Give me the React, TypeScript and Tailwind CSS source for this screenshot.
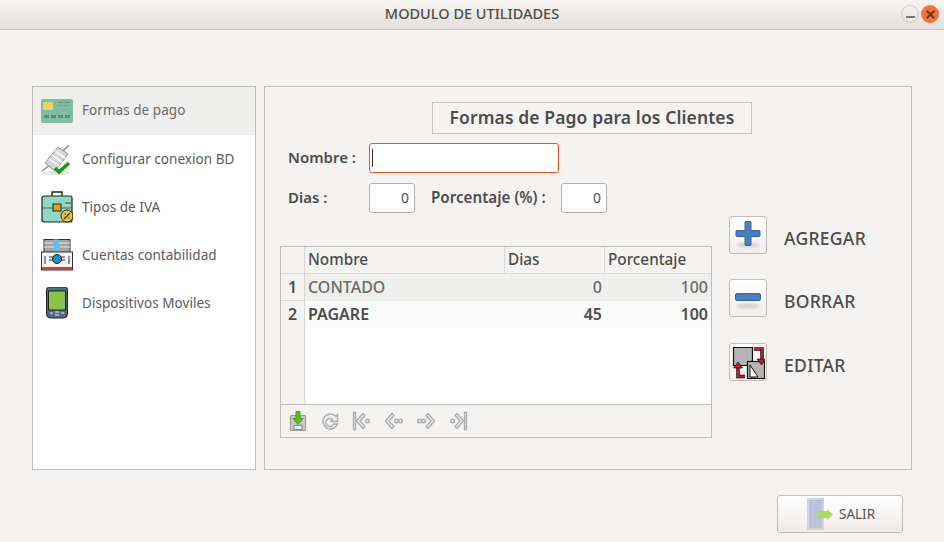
import React from 'react';
import { X } from 'lucide-react';

const font = { fontFamily: '"Noto Sans", sans-serif' };

const CardIcon = () => (
  <svg width="32" height="24" viewBox="0 0 32 24">
    <rect width="32" height="24" rx="2" fill="#7fbda3" />
    <rect x="2" y="3" width="10" height="8" rx="1" fill="#ecd06a" />
    <path d="M17 3.500h5M24 3.500h5" stroke="#5f8f7c" />
    <path d="M17 6.500h12" stroke="#5f8f7c" strokeDasharray="1 1" />
    <path d="M3 17.500h5M10 17.500h5M17 17.500h5M24 17.500h5" stroke="#5d8a78" strokeWidth="3" />
  </svg>
);

const PlugIcon = () => (
  <svg width="32" height="32" viewBox="0 0 32 32">
    <ellipse cx="15" cy="30" rx="14" ry="2" fill="#e2e2e2" />
    <path d="M1 28l8-6M22 8l6-6" stroke="#8c8c8c" strokeWidth="1.500" />
    <path d="M4 20L17 4l10 7-13 17z" fill="#d6d6d6" stroke="#8c8c8c" />
    <path d="M8 16l10 7M11 12l10 7M14 8l10 7" stroke="#f6f6f6" strokeWidth="1.800" />
    <path d="M14 25l4 4 10-9" fill="none" stroke="#0f9f0f" strokeWidth="3.500" />
  </svg>
);

const CaseIcon = () => (
  <svg width="32" height="32" viewBox="0 0 32 32">
    <path d="M11 5V1h10v4" fill="none" stroke="#222" strokeWidth="1.500" />
    <rect x="1" y="5" width="30" height="26" rx="2" fill="#8ed8c4" stroke="#222" strokeWidth="1.200" />
    <path d="M1 17h30" stroke="#3d6f60" />
    <rect x="12" y="13" width="8" height="7" fill="#e8a020" stroke="#222" />
    <path d="M24 12h6" stroke="#444" />
    <circle cx="26" cy="25" r="6" fill="#f4c91e" stroke="#222" />
    <path d="M23 28l6-6M23.500 23h1.500M27 27h1.500" stroke="#222" strokeWidth="1.200" />
  </svg>
);

const CashIcon = () => (
  <svg width="32" height="32" viewBox="0 0 32 32">
    <rect x="3" y="0.500" width="26" height="14" fill="#a5a5a5" stroke="#333" />
    <path d="M3 4h26M3 8h26" stroke="#e8e8e8" />
    <rect x="12" y="0.500" width="6" height="6" fill="#63c0ea" />
    <rect x="13" y="7" width="6" height="6" fill="#63c0ea" />
    <rect x="0.500" y="13" width="31" height="18" fill="#f4f4f4" stroke="#333" />
    <rect x="1" y="28" width="30" height="3" fill="#d43c3c" />
    <circle cx="16" cy="20" r="4.500" fill="#1b8fc4" stroke="#222" />
    <path d="M4 25v-8M28 25v-8M8 18h4M8 21h4M20 18h4M20 21h4" stroke="#333" />
  </svg>
);

const PhoneIcon = () => (
  <svg width="32" height="32" viewBox="0 0 32 32">
    <path d="M5.500 3a3 3 0 0 1 3-3h15a3 3 0 0 1 3 3v24a4 4 0 0 1-4 4h-13a4 4 0 0 1-4-4z" fill="#4f6f80" stroke="#222" />
    <rect x="7.500" y="4" width="17" height="19" fill="#8bc34a" stroke="#222" />
    <path d="M9 26h3M20 26h3M14 25h4M14 28h4" stroke="#b5c8d2" strokeWidth="1.500" />
  </svg>
);

const rows = [
  { name: 'Formas de pago', icon: <CardIcon />, active: true },
  { name: 'Configurar conexion BD', icon: <PlugIcon /> },
  { name: 'Tipos de IVA', icon: <CaseIcon /> },
  { name: 'Cuentas contabilidad', icon: <CashIcon /> },
  { name: 'Dispositivos Moviles', icon: <PhoneIcon /> },
];

const Nav = ({ children }: { children: React.ReactNode }) => (
  <svg width="20" height="20" viewBox="0 0 20 20" fill="#efefee" stroke="#adadad" strokeWidth="1.400" strokeLinejoin="round">
    {children}
  </svg>
);

const PlusIcon = () => (
  <svg width="28" height="32" viewBox="0 0 28 32">
    <ellipse className="blur-[1.500px]" cx="14" cy="26" rx="12" ry="2" fill="#cfcac5" />
    <path d="M11 3.500a1 1 0 0 1 1-1h4a1 1 0 0 1 1 1v8h8a1 1 0 0 1 1 1v4a1 1 0 0 1-1 1h-8v8a1 1 0 0 1-1 1h-4a1 1 0 0 1-1-1v-8H3a1 1 0 0 1-1-1v-4a1 1 0 0 1 1-1h8z" fill="#4a7fbb" stroke="#34649e" />
  </svg>
);

const MinusIcon = () => (
  <svg width="28" height="32" viewBox="0 0 28 32">
    <ellipse className="blur-[1.500px]" cx="14" cy="24" rx="12" ry="2" fill="#cfcac5" />
    <rect x="1.500" y="11.500" width="25" height="7" rx="1.500" fill="#4a7fbb" stroke="#34649e" />
  </svg>
);

const EditIcon = () => (
  <svg width="34" height="34" viewBox="0 0 34 34">
    <path d="M2.500 2.500h19v13l-6 5h-13z" fill="#b4b4b4" stroke="#111" strokeWidth="1.200" />
    <rect x="16.500" y="16.500" width="17" height="17" fill="#b4b4b4" stroke="#111" strokeWidth="1.200" />
    <path d="M19 32V20l8 12z" fill="#fff" stroke="#111" />
    <path d="M23 4h8v11" fill="none" stroke="#111" strokeWidth="3.500" />
    <path d="M23 4h8v11" fill="none" stroke="#c8182a" strokeWidth="2" />
    <path d="M26 14h9l-4.500 6z" fill="#c8182a" stroke="#111" strokeWidth="0.700" />
    <path d="M14 31.500H7V22" fill="none" stroke="#111" strokeWidth="3.500" />
    <path d="M14 31.500H7V22" fill="none" stroke="#c8182a" strokeWidth="2" />
    <path d="M2.500 23h9L7 17z" fill="#c8182a" stroke="#111" strokeWidth="0.700" />
  </svg>
);

const Action = ({ icon, label, className }: { icon: React.ReactNode; label: string; className?: string }) => (
  <div className={`flex items-center gap-[17px] ${className ?? ''}`}>
    <div className="flex h-[38px] w-[38px] items-center justify-center rounded-[3px] border border-[#c4bcb2] bg-gradient-to-b from-white to-[#f1efec]">
      {icon}
    </div>
    <span className="pt-[6px] text-[17.500px] font-medium tracking-[0.300px] text-[#4c4c4c]">{label}</span>
  </div>
);

export default function App() {
  return (
    <div className="flex h-[542px] w-[944px] flex-col overflow-hidden bg-[#f5f3f1] text-[#4c4c4c]" style={font}>
      <header className="relative flex h-[30px] items-center justify-center rounded-t-[6px] border-b border-[#d3cbc2] bg-gradient-to-b from-[#f6f4f2] to-[#e4dfd9]">
        <span className="pb-[1px] text-[14.500px] font-medium text-[#4c4c4c]">MODULO DE UTILIDADES</span>
        <div className="absolute right-[5px] top-[5px] flex gap-[2px]">
          <div className="flex h-[18px] w-[18px] items-end justify-center rounded-full border border-[#cfc9c2] pb-[4px]">
            <div className="h-[2px] w-[9px] bg-[#777]" />
          </div>
          <div className="flex h-[18px] w-[18px] items-center justify-center rounded-full bg-[#f0733a]">
            <X size={13} strokeWidth={3.500} className="text-[#5a3a2c]" />
          </div>
        </div>
      </header>

      <main className="flex gap-2 px-8 pt-[56px]">
        <aside className="h-[384px] w-[224px] border border-[#bfbdba] bg-white">
          {rows.map(r => (
            <div key={r.name} className={`flex h-[48px] items-center gap-[9px] pl-2 ${r.active ? 'bg-[#efefee] text-[#6a6a6a]' : 'text-[#5a5a5a]'}`}>
              <span className="flex w-[32px] justify-center">{r.icon}</span>
              <span className={`text-[13.500px] tracking-[0.050px] ${r.active ? 'pb-[2px]' : ''}`}>{r.name}</span>
            </div>
          ))}
        </aside>

        <section className="flex h-[384px] w-[648px] flex-col border border-[#bfbdba] pt-[15px]">
          <div className="ml-[167px] flex h-[32px] w-[320px] items-center justify-center border border-[#c9c2b8] pb-[2px] text-[17.500px] font-semibold tracking-[0.100px]">
            Formas de Pago para los Clientes
          </div>

          <div className="flex">
            <div className="ml-[15px] w-[432px]">
              <div className="mt-[9px] flex h-[30px] items-center">
                <span className="ml-2 w-[81px] pb-[2px] text-[15px] font-semibold">Nombre :</span>
                <div className="flex h-[30px] w-[190px] items-center rounded-[3px] border border-[#e95420] bg-white pl-[2px]">
                  <div className="h-[18px] w-px bg-[#333]" />
                </div>
              </div>
              <div className="mt-[10px] flex h-[30px] items-center">
                <span className="ml-2 w-[81px] pb-[2px] text-[15px] font-semibold">Dias :</span>
                <div className="flex h-[30px] w-[46px] items-center justify-end rounded-[3px] border border-[#b6aea4] bg-white pb-[2px] pr-[5px] text-[14px]">0</div>
                <span className="ml-4 w-[130px] pb-[2px] text-[15.200px] font-semibold">Porcentaje (%) :</span>
                <div className="flex h-[30px] w-[46px] items-center justify-end rounded-[3px] border border-[#b6aea4] bg-white pb-[2px] pr-[5px] text-[14px]">0</div>
              </div>

              <div className="mt-[33px] flex h-[192px] flex-col border border-[#bfbdba]">
                <div className="flex flex-1">
                  <div className="w-[24px] border-r border-[#d8d6d3]">
                    <div className="h-[27px] border-b border-[#dcdad7]" />
                    <div className="flex h-[27px] items-center justify-center border-b border-[#dcdad7] pb-[1px] text-[16px] font-semibold">1</div>
                    <div className="flex h-[27px] items-center justify-center pb-[1px] text-[16px] font-semibold">2</div>
                  </div>
                  <div className="flex-1 bg-white">
                    <div className="flex h-[27px] border-b border-[#dcdad7] bg-[#f5f3f1] text-[15.300px] font-medium">
                      <div className="w-[200px] border-r border-[#dcdad7] pl-[3px] leading-[24px]">Nombre</div>
                      <div className="w-[100px] border-r border-[#dcdad7] pl-[3px] leading-[24px]">Dias</div>
                      <div className="flex-1 pl-[3px] leading-[24px]">Porcentaje</div>
                    </div>
                    <div className="flex h-[27px] items-center bg-[#efefee] pb-[1px] text-[16px] font-medium text-[#6a6a6a]">
                      <div className="w-[200px] pl-[3px]">CONTADO</div>
                      <div className="w-[100px] pr-[3px] text-right">0</div>
                      <div className="flex-1 pr-[3px] text-right">100</div>
                    </div>
                    <div className="flex h-[27px] items-center bg-[#fafafa] pb-[1px] text-[16px] font-semibold">
                      <div className="w-[200px] pl-[3px]">PAGARE</div>
                      <div className="w-[100px] pr-[3px] text-right">45</div>
                      <div className="flex-1 pr-[3px] text-right">100</div>
                    </div>
                  </div>
                </div>
                <div className="flex h-[33px] items-center gap-3 border-t border-[#bfbdba] pl-[7px]">
                  <svg width="20" height="20" viewBox="0 0 20 20">
                    <path d="M2.500 4.500h15v15h-15z" fill="#c8c8c0" stroke="#9a9a92" />
                    <rect x="6" y="14.500" width="8" height="4" fill="#eee" stroke="#888" />
                    <path d="M8 0.500h4v7h3l-5 6-5-6h3z" fill="#5ebd2c" stroke="#46991e" />
                  </svg>
                  <Nav>
                    <path d="M16 5.500a7.500 7.500 0 1 0 1.500 7.500h-4a4 4 0 1 1-1-4.500l-2 2h7V3z" />
                  </Nav>
                  <Nav>
                    <path d="M1.500 1.500h2v17h-2z" />
                    <path d="M11 2.500L4.500 10l6.500 7.500 2-2L8 10l5-5.500z" />
                    <circle cx="15.500" cy="10" r="1.800" />
                  </Nav>
                  <Nav>
                    <path d="M8 2.500L1.500 10 8 17.500l2-2L5 10l5-5.500z" />
                    <circle cx="12.500" cy="10" r="1.800" />
                    <circle cx="16.500" cy="10" r="1.800" />
                  </Nav>
                  <Nav>
                    <path d="M12 2.500l6.500 7.500-6.500 7.500-2-2 5-5.500-5-5.500z" />
                    <circle cx="7.500" cy="10" r="1.800" />
                    <circle cx="3.500" cy="10" r="1.800" />
                  </Nav>
                  <Nav>
                    <path d="M16.500 1.500h2v17h-2z" />
                    <path d="M9 2.500l6.500 7.500L9 17.500l-2-2 5-5.500-5-5.500z" />
                    <circle cx="4.500" cy="10" r="1.800" />
                  </Nav>
                </div>
              </div>
            </div>

            <div className="ml-[17px] mt-[82px] flex flex-col gap-[25px]">
              <Action icon={<PlusIcon />} label="AGREGAR" />
              <Action icon={<MinusIcon />} label="BORRAR" />
              <Action icon={<EditIcon />} label="EDITAR" className="mt-px" />
            </div>
          </div>
        </section>
      </main>

      <div className="mr-[41px] mt-[25px] flex justify-end">
        <button className="flex h-[38px] w-[126px] items-center rounded-[3px] border border-[#c4bcb2] bg-gradient-to-b from-white to-[#efebe7] text-[13.500px] text-[#555]">
          <span className="relative ml-[29px] h-[32px] w-[17px] border-2 border-[#ccd4e8] bg-[#b9c3dc]">
            <svg className="absolute left-[9px] top-[9px]" width="15" height="11" viewBox="0 0 15 11">
              <path d="M0 2h9V0l6 5.500L9 11V9H0z" fill="#a7dc62" />
            </svg>
          </span>
          <span className="ml-[15px]">SALIR</span>
        </button>
      </div>
    </div>
  );
}
